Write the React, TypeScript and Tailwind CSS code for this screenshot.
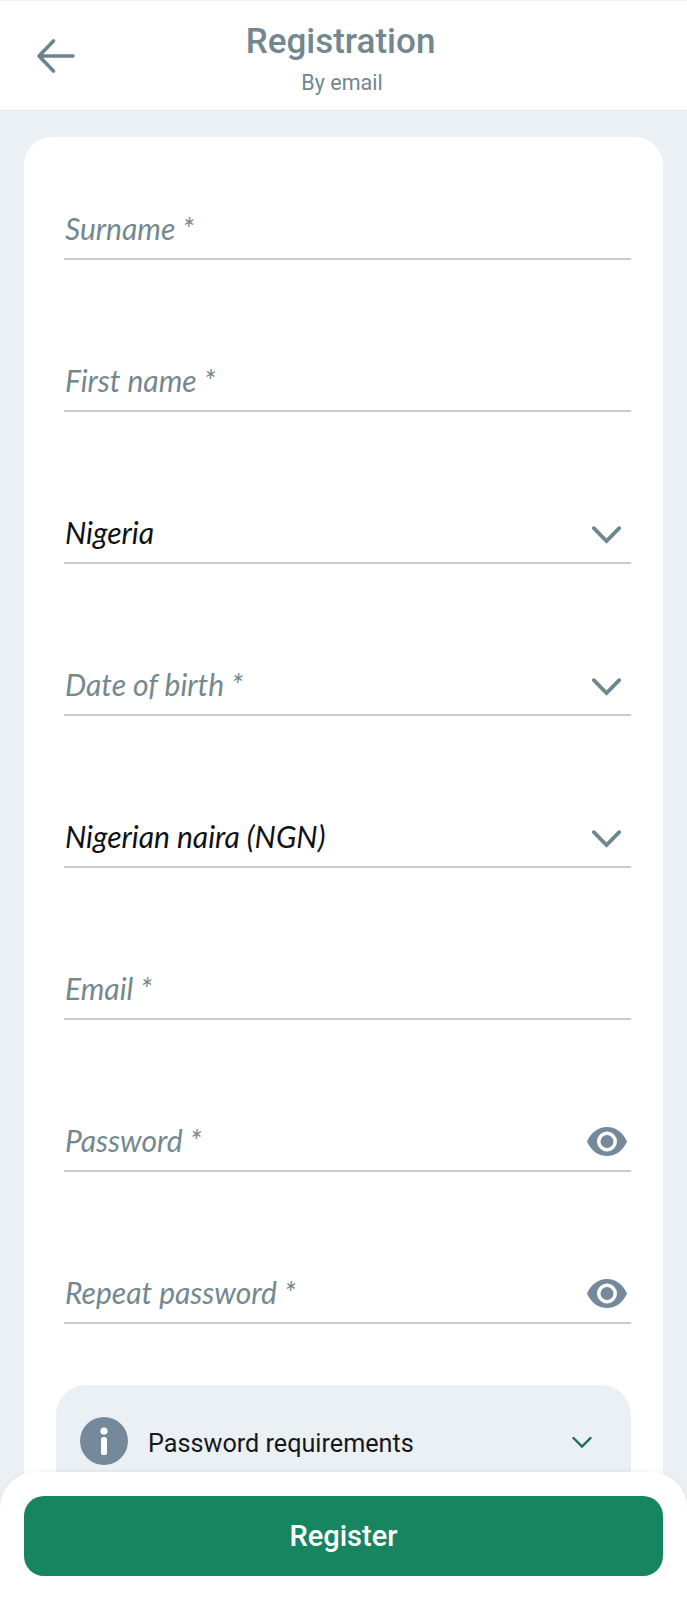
function Chevron() {
  return (
    <svg width="29" height="18" viewBox="0 0 29 18" fill="none" className="text-[#6f868f]">
      <path d="M1.8 2.2L14.5 15L27.2 2.2" stroke="currentColor" strokeWidth="3.8" strokeLinecap="round" strokeLinejoin="miter" />
    </svg>
  );
}

function Eye() {
  return (
    <svg width="40" height="29" viewBox="0 0 40 29" className="text-[#75899a]">
      <path
        fill="currentColor"
        fillRule="evenodd"
        d="M20 0C29 0 36 5.5 40 14.5C36 23.5 29 29 20 29C11 29 4 23.5 0 14.5C4 5.5 11 0 20 0ZM20 4.5a10 10 0 1 0 0 20a10 10 0 1 0 0-20ZM20 8a6.5 6.5 0 1 1 0 13a6.5 6.5 0 1 1 0-13Z"
      />
    </svg>
  );
}

function Field({ label, value, icon }: { label: string; value?: boolean; icon?: "chevron" | "eye" }) {
  return (
    <div className="flex h-[64px] w-full items-center justify-between border-b-2 border-[#c6cccf] pt-[2px]">
      <span className={`ml-[1px] font-['Lato',sans-serif] text-[30px] font-normal italic leading-[36px] ${value ? "text-[#0f1214]" : "text-[#748890]"}`}>
        {label}
      </span>
      {icon === "chevron" && (
        <span className="mr-[10px] mt-[6px] flex">
          <Chevron />
        </span>
      )}
      {icon === "eye" && (
        <span className="mr-[4px] mt-[3px] flex">
          <Eye />
        </span>
      )}
    </div>
  );
}

export default function App() {
  return (
    <div className="relative h-[1600px] w-[687px] overflow-hidden bg-[#ebf0f5] font-['Roboto',sans-serif]">
      <header className="relative flex h-[111px] flex-col items-center border-t border-b border-t-[#f0f2f3] border-b-[#e4e7e9] bg-white pr-[3px] pt-[17px]">
        <svg width="42" height="38" viewBox="0 0 42 38" fill="none" className="absolute left-[35px] top-[36px] text-[#6a8490]">
          <path d="M38 19H4M18.5 4L4 19L18.5 34" stroke="currentColor" strokeWidth="3.6" strokeLinecap="round" strokeLinejoin="round" />
        </svg>
        <h1 className="mr-[3px] text-[35px] font-medium leading-[48px] text-[#72878f]">Registration</h1>
        <p className="mt-[3px] text-[21.5px] leading-[28px] text-[#72878f]">By email</p>
      </header>

      <main className="mx-[24px] mt-[26px] h-[1500px] rounded-[28px] bg-white px-[32px]">
        <div className="flex flex-col gap-[88px] pl-[8px] pt-[59px]">
          <Field label="Surname *" />
          <Field label="First name *" />
          <Field label="Nigeria" value icon="chevron" />
          <Field label="Date of birth *" icon="chevron" />
          <Field label="Nigerian naira (NGN)" value icon="chevron" />
          <Field label="Email *" />
          <Field label="Password *" icon="eye" />
          <Field label="Repeat password *" icon="eye" />
        </div>
        <div className="mt-[61px] flex h-[120px] items-start justify-between rounded-[30px] bg-[#ebf0f5] pl-[24px] pr-[39px] pt-[32px]">
          <div className="flex items-center gap-[20px]">
            <svg width="48" height="48" viewBox="0 0 48 48">
              <circle cx="24" cy="24" r="24" fill="#75899a" />
              <circle cx="24" cy="14" r="3.6" fill="#fff" />
              <rect x="21" y="20" width="6" height="18" rx="2.6" fill="#fff" />
            </svg>
            <span className="mt-[6px] text-[25.2px] leading-[32px] text-[#16191c]">Password requirements</span>
          </div>
          <svg width="20" height="13" viewBox="0 0 20 13" fill="none" className="mt-[19px] text-[#17705a]">
            <path d="M1.5 2L10 10.5L18.5 2" stroke="currentColor" strokeWidth="2.4" strokeLinecap="round" />
          </svg>
        </div>
      </main>

      <footer className="absolute bottom-0 left-0 right-0 flex h-[128px] items-start rounded-t-[36px] bg-white px-[24px] pt-[24px] shadow-[0_-2px_4px_rgba(0,0,0,0.04)]">
        <button className="flex h-[80px] w-full items-center justify-center rounded-[20px] bg-[#178560] pt-[1px] text-[29px] font-medium text-white">
          Register
        </button>
      </footer>
    </div>
  );
}
